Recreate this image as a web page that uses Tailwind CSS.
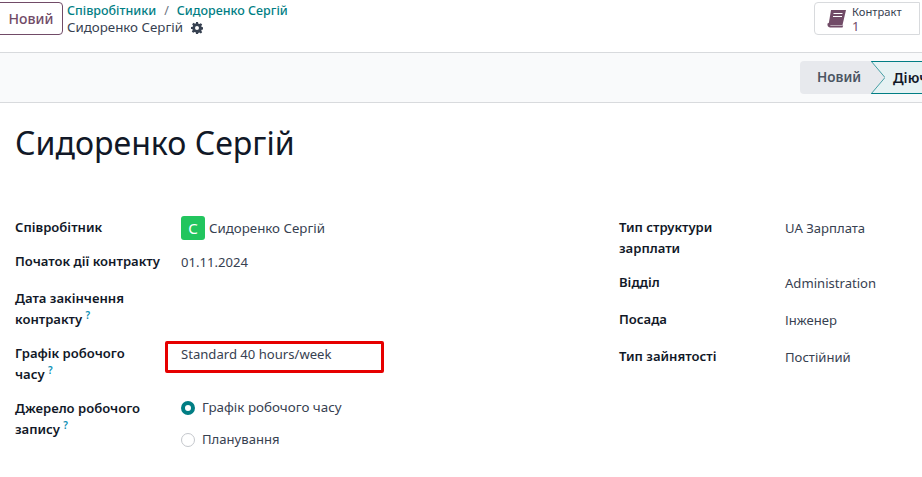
<!DOCTYPE html>
<html><head><meta charset="utf-8"><script src="https://cdn.jsdelivr.net/npm/@tailwindcss/browser@4"></script></head>
<body class="w-[922px] h-[477px] overflow-hidden bg-white font-['Noto_Sans','Open_Sans',sans-serif] text-[13.1px] text-[#374151]">
<header class="h-[53px] border-b border-[#d8dadd] flex items-start">
  <button class="ml-[-6px] mt-[2px] w-[69px] h-[33px] border border-[#714b67] rounded-[4px] text-[#714b67] font-medium text-[14px] pl-[5px]">Новий</button>
  <div class="ml-[4px] mt-[1px]">
    <div class="flex h-[18px] leading-[18px] font-medium text-[12.500px] text-[#017e84] pt-[0.5px]"><span>Співробітники</span><span class="mx-[8px] text-[#6b7280] font-normal">/</span><span>Сидоренко Сергій</span></div>
    <div class="flex items-center h-[17px] text-[13.300px]"><span>Сидоренко Сергій</span>
      <svg class="ml-[8px]" width="12" height="12" viewBox="0 0 24 24" fill="#374151"><path fill-rule="evenodd" d="M10 0h4l.7 3.400 2 .8 2.900-1.900 2.800 2.800-1.900 2.900.8 2 3.400.7v4l-3.400.7-.8 2 1.900 2.900-2.800 2.800-2.900-1.900-2 .8L14 24h-4l-.7-3.400-2-.8-2.900 1.900-2.800-2.800 1.900-2.900-.8-2L0 14v-4l3.400-.7.8-2-1.900-2.900 2.800-2.800 2.900 1.900 2-.8zM12 8a4 4 0 1 0 0 8 4 4 0 0 0 0-8z"/></svg>
    </div>
  </div>
  <div class="ml-auto mt-[2px] mr-[2px] w-[106px] h-[33px] border border-[#d8dadd] rounded-l-[4px] flex items-center">
    <svg class="ml-[11px]" width="21" height="20" viewBox="0 0 21 20"><path d="M5 1h15l-3.500 15H2.500z" fill="#714b67"/><path d="M1.500 14.500Q1 18 4 18.500h12.500l.7-2H5q-2-.5-1-3z" fill="#714b67"/><path d="M7.500 4.500h9M7 7.500h9" stroke="#fff" stroke-width="1.200"/></svg>
    <div class="ml-[5px] text-[11.200px]"><div class="h-[15px] leading-[15px]">Контракт</div><div class="h-[14px] leading-[14px] text-[#714b67] text-[13px]">1</div></div>
  </div>
</header>
<div class="h-[50px] bg-[#f9fafb] border-b border-[#d8dadd] flex justify-end overflow-hidden pt-[8px]">
  <div class="relative flex h-[33px] w-[122px] shrink-0">
    <div class="w-[71px] h-[33px] bg-[#e7e9ed] rounded-l-[4px] text-[13.500px] font-semibold text-[#4b5563] flex items-center pl-[17px]">Новий</div>
    <div class="w-[51px] bg-[#e6f2f3] border-y border-[#017e84] h-[33px] text-[14px] font-semibold text-[#111827] flex items-center pl-[22px] whitespace-nowrap overflow-hidden">Діюч</div>
    <svg class="absolute left-[71px] top-0" width="14" height="33" viewBox="0 0 14 33"><path d="M0 0L14 16.500L0 33z" fill="#e7e9ed"/><path d="M0 0L14 16.500L0 33" fill="none" stroke="#017e84" stroke-opacity=".7" stroke-width="1"/></svg>
  </div>
</div>
<main class="px-[15px] relative">
  <h1 class="mt-[18px] h-[46px] text-[32.100px] leading-[44px] text-[#111827] font-normal">Сидоренко Сергій</h1>
  <div class="mt-[49px] flex">
    <div class="w-[604px] shrink-0">
      <div class="grid grid-cols-[166px_1fr] leading-[21px]">
        <div class="font-semibold text-[#111827] pt-[1px] h-[35px]">Співробітник</div>
        <div class="flex items-start h-[35px]"><span class="w-[24px] h-[24px] rounded-[3px] bg-[#22c55e] text-white text-[15px] flex items-center justify-center">С</span><span class="ml-[4px] pt-[2px] text-[13.300px]">Сидоренко Сергій</span></div>
        <div class="font-semibold text-[#111827] h-[37px]">Початок дії контракту</div>
        <div class="h-[37px] pt-[1px]">01.11.2024</div>
        <div class="font-semibold text-[#111827] h-[55px]">Дата закінчення<br>контракту <sup class="text-[#0e8fb5] text-[10px]">?</sup></div>
        <div></div>
        <div class="font-semibold text-[#111827] h-[55px]">Графік робочого<br>часу <sup class="text-[#0e8fb5] text-[10px]">?</sup></div>
        <div class="relative"><span class="relative top-[1px]">Standard 40 hours/week</span><div class="absolute left-[-16px] top-[-2px] w-[219px] h-[32px] border-[3px] border-[#e60000] rounded-[2px]"></div></div>
        <div class="font-semibold text-[#111827]">Джерело робочого<br>запису <sup class="text-[#0e8fb5] text-[10px]">?</sup></div>
        <div>
          <div class="flex items-center h-[21px] -mt-[1px]"><span class="w-[14px] h-[14px] rounded-full border-[4px] border-[#017e84] bg-white"></span><span class="ml-[7px] text-[13.400px]">Графік робочого часу</span></div>
          <div class="flex items-center h-[21px] mt-[11px]"><span class="w-[14px] h-[14px] rounded-full border border-[#c4c7cc] bg-white"></span><span class="ml-[7px]">Планування</span></div>
        </div>
      </div>
    </div>
    <div class="flex-1">
      <div class="grid grid-cols-[166px_1fr] leading-[21px]">
        <div class="font-semibold text-[#111827] h-[55px] pt-[1px]">Тип структури<br>зарплати</div><div class="pt-[2px]">UA Зарплата</div>
        <div class="font-semibold text-[#111827] h-[37px] pt-[1px]">Відділ</div><div class="pt-[2px]">Administration</div>
        <div class="font-semibold text-[#111827] h-[37px] pt-[1px]">Посада</div><div class="pt-[2px]">Інженер</div>
        <div class="font-semibold text-[#111827] h-[37px] pt-[1px]">Тип зайнятості</div><div class="pt-[2px]">Постійний</div>
      </div>
    </div>
  </div>
</main>
</body></html>
